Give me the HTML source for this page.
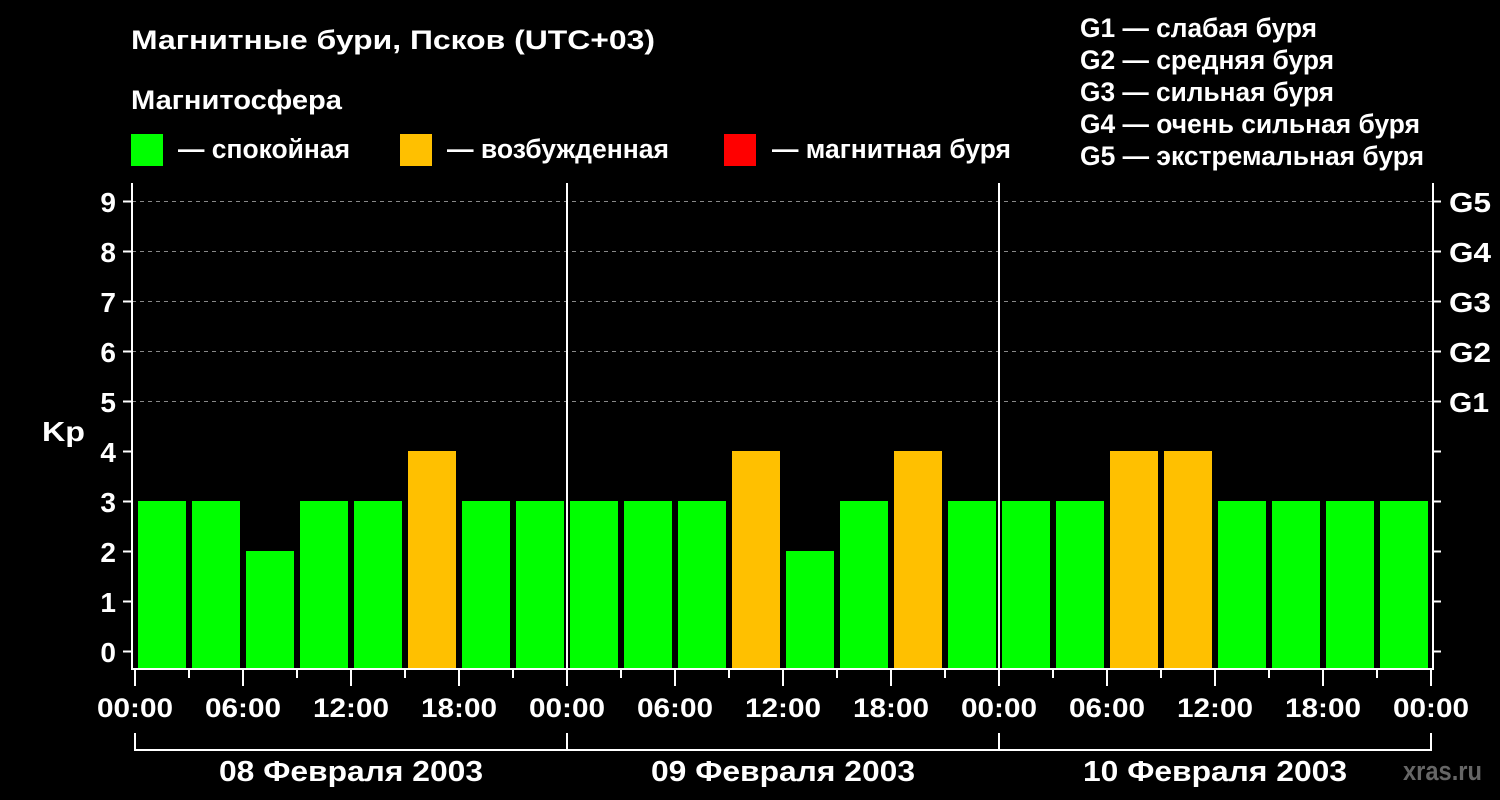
<!DOCTYPE html>
<html><head><meta charset="utf-8"><style>
html,body{margin:0;padding:0;background:#000;}
svg{display:block;font-family:"Liberation Sans",Arial,sans-serif;font-weight:bold;}
</style></head><body>
<svg width="1500" height="800" viewBox="0 0 1500 800" xmlns="http://www.w3.org/2000/svg">
<rect width="1500" height="800" fill="#000"/>
<g fill="#fff" font-size="27" lengthAdjust="spacingAndGlyphs">
<text x="131" y="49" textLength="524" lengthAdjust="spacingAndGlyphs">Магнитные бури, Псков (UTC+03)</text>
<text x="131" y="109" textLength="211" lengthAdjust="spacingAndGlyphs">Магнитосфера</text>
<text x="178" y="158" textLength="172" lengthAdjust="spacingAndGlyphs">— спокойная</text>
<text x="447" y="158" textLength="222" lengthAdjust="spacingAndGlyphs">— возбужденная</text>
<text x="772" y="158" textLength="239" lengthAdjust="spacingAndGlyphs">— магнитная буря</text>
<text x="1080" y="37" textLength="237" lengthAdjust="spacingAndGlyphs">G1 — слабая буря</text>
<text x="1080" y="69" textLength="254" lengthAdjust="spacingAndGlyphs">G2 — средняя буря</text>
<text x="1080" y="101" textLength="254" lengthAdjust="spacingAndGlyphs">G3 — сильная буря</text>
<text x="1080" y="133" textLength="340" lengthAdjust="spacingAndGlyphs">G4 — очень сильная буря</text>
<text x="1080" y="165" textLength="344" lengthAdjust="spacingAndGlyphs">G5 — экстремальная буря</text>
</g>
<rect x="131" y="134" width="32" height="32" fill="#00ff00"/>
<rect x="400" y="134" width="32" height="32" fill="#ffc000"/>
<rect x="724" y="134" width="32" height="32" fill="#ff0000"/>
<g stroke="#888" stroke-dasharray="4,4" stroke-width="1">
<line x1="132" y1="201.5" x2="1432" y2="201.5"/>
<line x1="132" y1="251.5" x2="1432" y2="251.5"/>
<line x1="132" y1="301.5" x2="1432" y2="301.5"/>
<line x1="132" y1="351.5" x2="1432" y2="351.5"/>
<line x1="132" y1="401.5" x2="1432" y2="401.5"/>
</g>
<g>
<rect x="138" y="501" width="48" height="167" fill="#00ff00"/>
<rect x="192" y="501" width="48" height="167" fill="#00ff00"/>
<rect x="246" y="551" width="48" height="117" fill="#00ff00"/>
<rect x="300" y="501" width="48" height="167" fill="#00ff00"/>
<rect x="354" y="501" width="48" height="167" fill="#00ff00"/>
<rect x="408" y="451" width="48" height="217" fill="#ffc000"/>
<rect x="462" y="501" width="48" height="167" fill="#00ff00"/>
<rect x="516" y="501" width="48" height="167" fill="#00ff00"/>
<rect x="570" y="501" width="48" height="167" fill="#00ff00"/>
<rect x="624" y="501" width="48" height="167" fill="#00ff00"/>
<rect x="678" y="501" width="48" height="167" fill="#00ff00"/>
<rect x="732" y="451" width="48" height="217" fill="#ffc000"/>
<rect x="786" y="551" width="48" height="117" fill="#00ff00"/>
<rect x="840" y="501" width="48" height="167" fill="#00ff00"/>
<rect x="894" y="451" width="48" height="217" fill="#ffc000"/>
<rect x="948" y="501" width="48" height="167" fill="#00ff00"/>
<rect x="1002" y="501" width="48" height="167" fill="#00ff00"/>
<rect x="1056" y="501" width="48" height="167" fill="#00ff00"/>
<rect x="1110" y="451" width="48" height="217" fill="#ffc000"/>
<rect x="1164" y="451" width="48" height="217" fill="#ffc000"/>
<rect x="1218" y="501" width="48" height="167" fill="#00ff00"/>
<rect x="1272" y="501" width="48" height="167" fill="#00ff00"/>
<rect x="1326" y="501" width="48" height="167" fill="#00ff00"/>
<rect x="1380" y="501" width="48" height="167" fill="#00ff00"/>
</g>
<g stroke="#fff" stroke-width="2" fill="none">
<path d="M132 183 V669 H1433 V183"/>
<line x1="567" y1="183" x2="567" y2="669"/>
<line x1="999" y1="183" x2="999" y2="669"/>
<path d="M123 201.5H131M123 251.5H131M123 301.5H131M123 351.5H131M123 401.5H131M123 451.5H131M123 501.5H131M123 551.5H131M123 601.5H131M123 651.5H131"/>
<path d="M1433 201.5H1441M1433 251.5H1441M1433 301.5H1441M1433 351.5H1441M1433 401.5H1441M1433 451.5H1441M1433 501.5H1441M1433 551.5H1441M1433 601.5H1441M1433 651.5H1441"/>
<path d="M135 669V686M243 669V686M351 669V686M459 669V686M567 669V686M675 669V686M783 669V686M891 669V686M999 669V686M1107 669V686M1215 669V686M1323 669V686M1431 669V686"/>
<path d="M189 669V678M297 669V678M405 669V678M513 669V678M621 669V678M729 669V678M837 669V678M945 669V678M1053 669V678M1161 669V678M1269 669V678M1377 669V678"/>
<path d="M135 733V750H1431V733M567 733V750M999 733V750"/>
</g>
<g fill="#fff" font-size="28" text-anchor="end">
<text x="116" y="212">9</text><text x="116" y="262">8</text><text x="116" y="312">7</text>
<text x="116" y="362">6</text><text x="116" y="412">5</text><text x="116" y="462">4</text>
<text x="116" y="512">3</text><text x="116" y="562">2</text><text x="116" y="612">1</text>
<text x="116" y="662">0</text>
</g>
<text x="42" y="441" fill="#fff" font-size="28" textLength="43" lengthAdjust="spacingAndGlyphs">Kp</text>
<g fill="#fff" font-size="28">
<text x="1449" y="212" textLength="42" lengthAdjust="spacingAndGlyphs">G5</text>
<text x="1449" y="262" textLength="42" lengthAdjust="spacingAndGlyphs">G4</text>
<text x="1449" y="312" textLength="42" lengthAdjust="spacingAndGlyphs">G3</text>
<text x="1449" y="362" textLength="42" lengthAdjust="spacingAndGlyphs">G2</text>
<text x="1449" y="412" textLength="40" lengthAdjust="spacingAndGlyphs">G1</text>
</g>
<g fill="#fff" font-size="27" text-anchor="middle" lengthAdjust="spacingAndGlyphs">
<text x="135" y="717" textLength="76" lengthAdjust="spacingAndGlyphs">00:00</text>
<text x="243" y="717" textLength="76" lengthAdjust="spacingAndGlyphs">06:00</text>
<text x="351" y="717" textLength="76" lengthAdjust="spacingAndGlyphs">12:00</text>
<text x="459" y="717" textLength="76" lengthAdjust="spacingAndGlyphs">18:00</text>
<text x="567" y="717" textLength="76" lengthAdjust="spacingAndGlyphs">00:00</text>
<text x="675" y="717" textLength="76" lengthAdjust="spacingAndGlyphs">06:00</text>
<text x="783" y="717" textLength="76" lengthAdjust="spacingAndGlyphs">12:00</text>
<text x="891" y="717" textLength="76" lengthAdjust="spacingAndGlyphs">18:00</text>
<text x="999" y="717" textLength="76" lengthAdjust="spacingAndGlyphs">00:00</text>
<text x="1107" y="717" textLength="76" lengthAdjust="spacingAndGlyphs">06:00</text>
<text x="1215" y="717" textLength="76" lengthAdjust="spacingAndGlyphs">12:00</text>
<text x="1323" y="717" textLength="76" lengthAdjust="spacingAndGlyphs">18:00</text>
<text x="1431" y="717" textLength="76" lengthAdjust="spacingAndGlyphs">00:00</text>
<text x="351" y="781" font-size="29" textLength="264" lengthAdjust="spacingAndGlyphs">08 Февраля 2003</text>
<text x="783" y="781" font-size="29" textLength="264" lengthAdjust="spacingAndGlyphs">09 Февраля 2003</text>
<text x="1215" y="781" font-size="29" textLength="264" lengthAdjust="spacingAndGlyphs">10 Февраля 2003</text>
</g>
<text x="1403" y="780" fill="#666" font-size="27" textLength="79" lengthAdjust="spacingAndGlyphs">xras.ru</text>
</svg>
</body></html>
